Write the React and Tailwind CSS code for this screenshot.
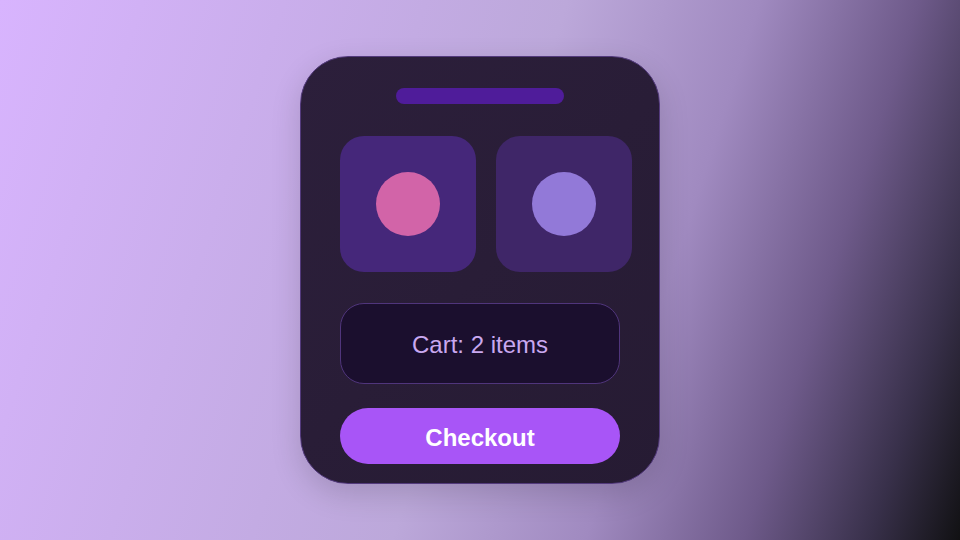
export default function App() {
  return (
    <div
      className="w-full h-[540px] flex items-center justify-center bg-[linear-gradient(108deg,#d8b4fe_0%,#bca8da_50%,#a08ac0_67%,#6e5a8a_81%,#38304a_92%,#111113_100%)]"
      style={{ fontFamily: '"Liberation Sans", Arial, sans-serif' }}
    >
      <div className="w-[360px] h-[428px] rounded-[48px] border border-[#533a7c] bg-[linear-gradient(135deg,#2c1f3b,#261b33)] px-[39px] pt-[31px] flex flex-col shadow-[0_10px_30px_rgba(0,0,0,0.15)]">
        <div className="mx-auto w-[168px] h-4 rounded-full bg-[#4f1c9a]" />
        <div className="mt-8 flex gap-5">
          <div className="w-[136px] h-[136px] shrink-0 rounded-3xl bg-[#45277a] flex items-center justify-center">
            <div className="w-16 h-16 rounded-full bg-[#d264a8]" />
          </div>
          <div className="w-[136px] h-[136px] shrink-0 rounded-3xl bg-[#3f2668] flex items-center justify-center">
            <div className="w-16 h-16 rounded-full bg-[#9279d8]" />
          </div>
        </div>
        <div className="mt-[31px] h-[81px] rounded-3xl border border-[#50357c] bg-[#1b0f2e] flex items-center justify-center pt-[3px]">
          <span className="text-2xl text-[#c9a8f0]">Cart: 2 items</span>
        </div>
        <button className="mt-6 h-14 rounded-full bg-[#a855f7] flex items-center justify-center pt-[3px] text-2xl font-bold text-white">
          Checkout
        </button>
      </div>
    </div>
  );
}
